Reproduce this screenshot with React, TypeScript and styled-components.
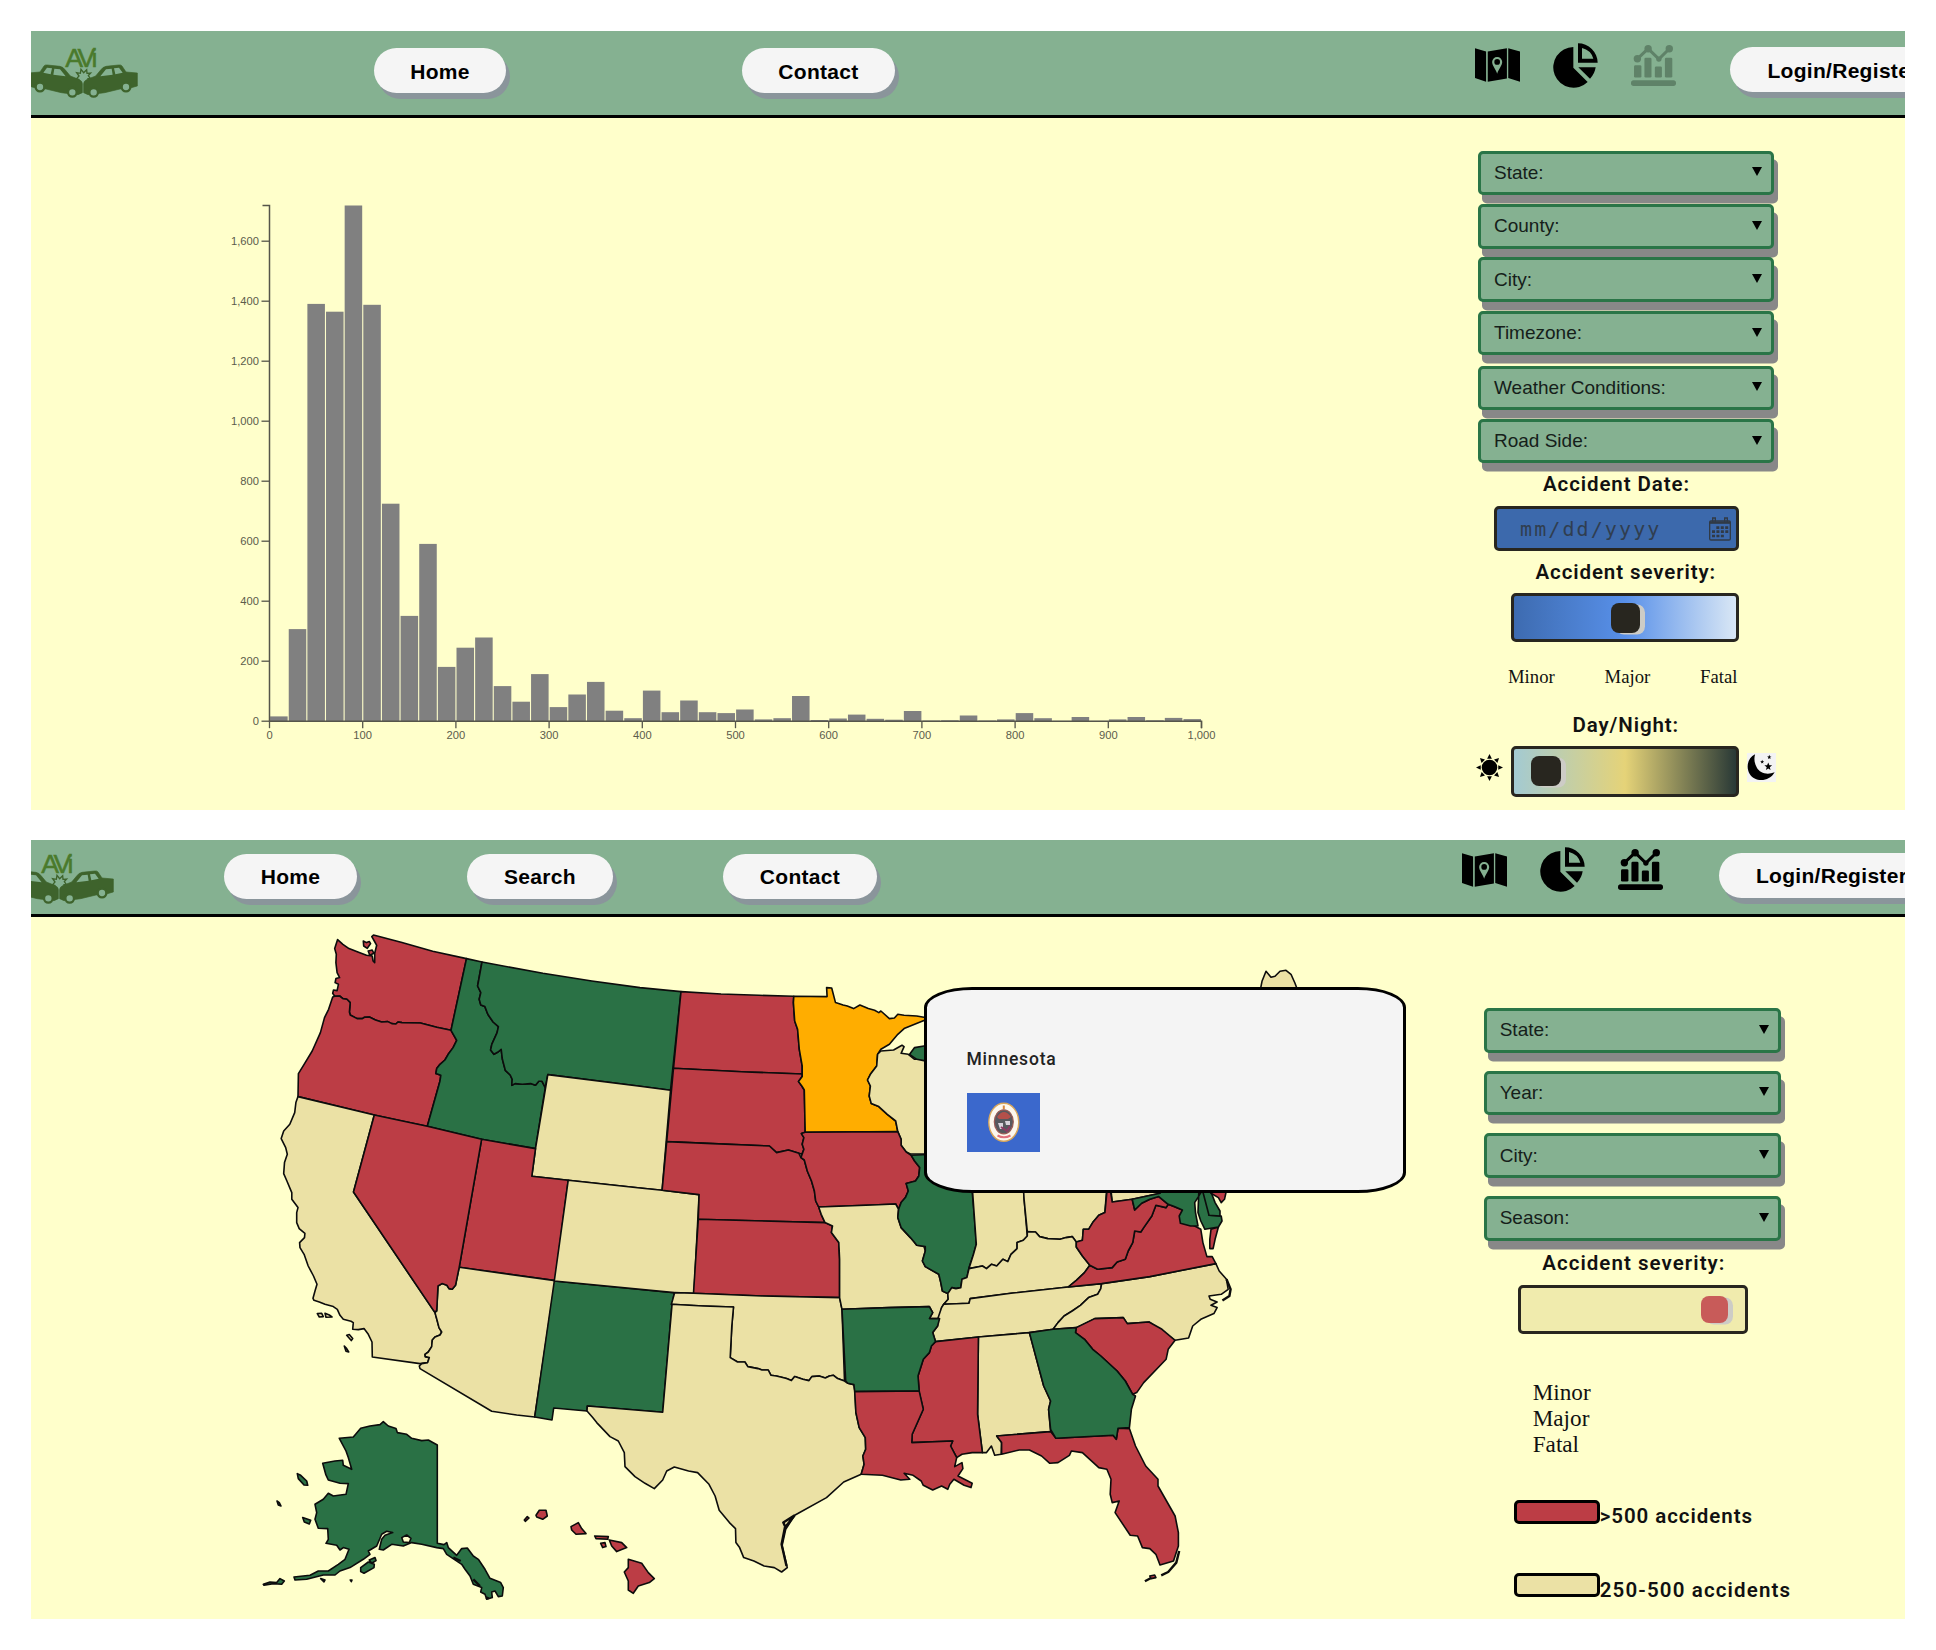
import React from "react";
import styled, { createGlobalStyle } from "styled-components";

const GlobalStyle = createGlobalStyle`
  * { box-sizing: border-box; }
  body { margin: 0; background: #ffffff; }
`;

const GREEN = "#85b191";
const RED = "#bc3d45";
const DARK = "#2a7145";
const SAND = "#ebe1a5";

const Page = styled.main`
  display: flex;
  flex-direction: column;
  gap: 30px;
  width: 1936px;
  height: 1650px;
  padding: 31px 31px 0;
  overflow: hidden;
`;

const Panel = styled.section`
  width: 1874px;
  height: 779px;
  background: #ffffcb;
  overflow: hidden;
`;

const Header = styled.header<{ $height: number }>`
  display: flex;
  align-items: flex-start;
  height: ${(p) => p.$height}px;
  background: ${GREEN};
  border-bottom: 3px solid #000;
  overflow: hidden;
`;

const LogoBox = styled.div<{ $left: number; $top: number }>`
  flex: none;
  width: 120px;
  height: 70px;
  margin: ${(p) => p.$top}px 0 0 ${(p) => p.$left}px;
`;

const NavButton = styled.button<{ $width: number; $left: number; $top: number }>`
  flex: none;
  width: ${(p) => p.$width}px;
  height: 45px;
  margin: ${(p) => p.$top}px 0 0 ${(p) => p.$left}px;
  padding: 2px 0 0;
  border: 0;
  border-radius: 23px;
  background: #f5f5f5;
  box-shadow: 4px 6px 0 #8a959b;
  color: #000;
  font: bold 21px "Liberation Sans", Arial, sans-serif;
  letter-spacing: 0.3px;
  white-space: nowrap;
`;

const IconBar = styled.div<{ $left: number; $top: number }>`
  display: flex;
  flex: none;
  align-items: center;
  gap: 33px;
  height: 46px;
  margin: ${(p) => p.$top}px 0 0 ${(p) => p.$left}px;
`;

const Body = styled.div`
  display: flex;
  position: relative;
`;

const Canvas = styled.div`
  flex: none;
  svg { display: block; }
`;

const Sidebar = styled.aside<{ $top: number; $left: number; $width: number }>`
  flex: none;
  display: flex;
  flex-direction: column;
  width: ${(p) => p.$width}px;
  margin-left: ${(p) => p.$left}px;
  padding-top: ${(p) => p.$top}px;
`;

const Fields = styled.div<{ $gap: number; $top?: number }>`
  display: flex;
  flex-direction: column;
  gap: ${(p) => p.$gap}px;
  margin-top: ${(p) => p.$top ?? 0}px;
`;

const Field = styled.div`
  display: flex;
  align-items: center;
  justify-content: space-between;
  height: 44.5px;
  padding: 0 9px 0 13px;
  border: 3px solid #2a7547;
  border-radius: 5px;
  background: ${GREEN};
  box-shadow: 4px 8.5px 0 #888;
  color: #15201a;
  font: 19px "Liberation Sans", Arial, sans-serif;
`;

const Arrow = styled.span`
  width: 0;
  height: 0;
  margin-top: -2px;
  border: solid transparent;
  border-width: 9px 5px 0;
  border-top-color: #000;
`;

const Caption = styled.div<{ $left: number; $top: number; $spacing?: number }>`
  height: 24px;
  margin: ${(p) => p.$top}px 0 0 ${(p) => p.$left}px;
  color: #111;
  font: 600 20.5px/24px Roboto, sans-serif;
  letter-spacing: ${(p) => p.$spacing ?? 0.9}px;
  white-space: nowrap;
`;

const DateInput = styled.div`
  display: flex;
  align-items: center;
  justify-content: space-between;
  width: 245px;
  height: 45.5px;
  margin: 9.5px 0 0 16px;
  padding: 2px 5px 0 23px;
  border: 3px solid #28261f;
  border-radius: 5px;
  background: #3c69ac;
  color: #303e50;
  font: 20px "DejaVu Sans Mono", monospace;
  letter-spacing: 2.1px;
`;

const Track = styled.div<{ $bg: string; $width: number; $height: number; $left: number; $top: number }>`
  flex: none;
  display: flex;
  align-items: flex-start;
  width: ${(p) => p.$width}px;
  height: ${(p) => p.$height}px;
  margin: ${(p) => p.$top}px 0 0 ${(p) => p.$left}px;
  border: 3px solid #28261f;
  border-radius: 5px;
  background: ${(p) => p.$bg};
`;

const Thumb = styled.div<{ $color: string; $size: number; $left: number; $top: number }>`
  width: ${(p) => p.$size}px;
  height: ${(p) => p.$size}px;
  margin: ${(p) => p.$top}px 0 0 ${(p) => p.$left}px;
  border-radius: 8px;
  background: ${(p) => p.$color};
  box-shadow: 5px 1.5px 0 #cdccc6;
`;

const Scale = styled.div`
  display: flex;
  justify-content: space-between;
  width: 229.5px;
  height: 22px;
  margin: 23.5px 0 0 30px;
  color: #111;
  font: 18.7px/22px "Liberation Serif", "Times New Roman", serif;
`;

const SkyRow = styled.div`
  display: flex;
  align-items: flex-start;
  width: 300px;
  margin: 9.3px 0 0 -2px;
`;

const SkyIcon = styled.svg<{ $left?: number; $top: number }>`
  flex: none;
  margin: ${(p) => p.$top}px 0 0 ${(p) => p.$left ?? 0}px;
`;

const SeverityList = styled.div`
  margin: 44.5px 0 43px 49px;
  color: #111;
  font: 23.2px/26px "Liberation Serif", "Times New Roman", serif;
`;

const LegendRow = styled.div`
  display: flex;
  height: 73.6px;
  margin-left: 30.3px;
`;

const Swatch = styled.span<{ $color: string }>`
  flex: none;
  width: 85.7px;
  height: 24px;
  border: 3px solid #000;
  border-radius: 5px;
  background: ${(p) => p.$color};
`;

const Tooltip = styled.div`
  position: absolute;
  left: 893px;
  top: 70px;
  width: 482px;
  height: 206px;
  padding: 58px 0 0 39.500px;
  border: 3px solid #000;
  border-radius: 10%;
  background: #f4f4f4;
  color: #222;
  font: 500 17.5px/22px Roboto, sans-serif;
  letter-spacing: 0.8px;
  svg { display: block; margin-top: 22.5px; }
`;

function Logo({ left, top }: { left: number; top: number }) {
  const car = (
    <>
      <path
        d="M2 99 L36 96 L48 78 Q51 74 58 75 L96 79 Q106 81 112 90 L127 108 L152 118 Q163 123 163 131 L163 158 L150 164 L114 160 L100 158 L54 147 L20 143 L2 138Z"
        fill="#3e632c"
        stroke="#3e632c"
        strokeWidth="2"
        strokeLinejoin="round"
      />
      <path d="M46 98 L57 83 L72 85 L68 103Z M79 86 L96 88 L113 109 L76 104Z" fill={GREEN} />
      <g fill={GREEN} stroke="#3e632c" strokeWidth="7">
        <circle cx="36" cy="141" r="13" />
        <circle cx="133" cy="157" r="13" />
      </g>
    </>
  );
  return (
    <LogoBox $left={left} $top={top}>
      <svg width="120" height="80" viewBox="0 0 360 240">
        {car}
        <g transform="translate(330 0) scale(-1 1)">{car}</g>
        <path
          d="M154 119 L145 117 L153 108 L146 98 L157 100 L159 88 L167 98 L176 89 L177 100 L188 99 L181 107 L187 116 L178 116"
          fill="none"
          stroke="#3e632c"
          strokeWidth="4"
        />
        <text
          x="112"
          y="80"
          fontFamily="Liberation Sans, Arial, sans-serif"
          fontSize="80"
          fill="#4a7a2c"
          stroke="#4a7a2c"
          strokeWidth="1.5"
          textLength="96"
          lengthAdjust="spacing"
        >
          AVi
        </text>
      </svg>
    </LogoBox>
  );
}

const MapIcon = () => (
  <svg width="45" height="34" viewBox="0 0 134 100">
    <path d="M0 0 L33 10 V100 L0 89Z M38 10 L95 0 V90 L38 100Z M99 0 L134 10 V100 L99 89Z" />
    <path d="M66 76 C62 62 51 52 51 41 A15 15 0 0 1 81 41 C81 52 70 62 66 76Z" fill={GREEN} />
    <circle cx="66" cy="41" r="8.5" />
  </svg>
);

const PieIcon = () => (
  <svg width="45" height="45" viewBox="0 0 135 135">
    <path d="M61 12 A61 61 0 1 0 104 117 L61 74Z" />
    <path d="M75 1 A59 59 0 0 1 134 59 H75Z M87 15 V47 H121 A46 46 0 0 0 87 15Z" fillRule="evenodd" />
    <path d="M76 73 H128 A60 60 0 0 1 111 107Z" />
  </svg>
);

const TrendIcon = ({ color = "#000" }: { color?: string }) => (
  <svg width="45" height="41" viewBox="0 0 134 122" fill={color}>
    <rect x="0" y="105" width="134" height="17" rx="8" />
    <rect x="9" y="60" width="22" height="37" rx="4" />
    <rect x="40" y="38" width="21" height="59" rx="4" />
    <rect x="71" y="64" width="21" height="33" rx="4" />
    <rect x="101" y="38" width="22" height="59" rx="4" />
    <path d="M19 41 L51 11 L83 42 L114 11" fill="none" stroke={color} strokeWidth="9" />
    <circle cx="19" cy="41" r="11" />
    <circle cx="51" cy="11" r="11" />
    <circle cx="83" cy="42" r="8" />
    <circle cx="114" cy="11" r="11" />
  </svg>
);

const CalendarIcon = () => (
  <svg width="22" height="24" viewBox="0 0 66 72" fill="none" stroke="#303a46" strokeWidth="4">
    <rect x="2" y="12" width="62" height="57" rx="4" />
    <path d="M2 17 H64" strokeWidth="7" />
    <path d="M11 15 V3 H19 V15 M47 15 V3 H55 V15" />
    <path d="M22 32 H58 M9 44 H58 M9 57 H46" strokeWidth="8" strokeDasharray="9 4.300" />
  </svg>
);

const BINS = [
  16, 307, 1391, 1365, 1719, 1388, 725, 351, 591, 181, 245, 279, 117, 65, 157, 47, 89, 131, 35, 10, 102, 30, 69, 30,
  27, 39, 6, 10, 84, 4, 9, 22, 8, 5, 34, 2, 3, 19, 2, 6, 27, 10, 1, 14, 1, 6, 14, 3, 11, 7,
];

const AXIS = { x: 238.5, y: 603.2, step: 18.64, unit: 0.3 };

function Histogram() {
  const top = AXIS.y - 1719 * AXIS.unit;
  const right = AXIS.x + AXIS.step * 50;
  const ticks = (n: number, by: number) => Array.from({ length: n }, (_, i) => i * by);
  return (
    <svg width="1400" height="690" fontFamily="Liberation Sans, Arial, sans-serif" fontSize="11.2" fill="#5c5c4c">
      <g fill="#808080">
        {BINS.map((v, i) => (
          <rect
            key={i}
            x={AXIS.x + i * AXIS.step + 0.6}
            y={AXIS.y - v * AXIS.unit}
            width={AXIS.step - 1.1}
            height={v * AXIS.unit}
          />
        ))}
      </g>
      <path
        d={`M${AXIS.x - 7} ${top} H${AXIS.x} V${AXIS.y} H${right} V${AXIS.y + 7}`}
        fill="none"
        stroke="#55554a"
        strokeWidth="1.5"
      />
      {ticks(9, 200).map((v) => {
        const y = AXIS.y - v * AXIS.unit;
        return (
          <g key={v}>
            <path d={`M${AXIS.x - 8} ${y} H${AXIS.x}`} stroke="#55554a" strokeWidth="1.3" />
            <text x={AXIS.x - 10.5} y={y + 3.8} textAnchor="end">
              {v.toLocaleString("en-US")}
            </text>
          </g>
        );
      })}
      {ticks(11, 100).map((v) => {
        const x = AXIS.x + (v / 20) * AXIS.step;
        return (
          <g key={v}>
            <path d={`M${x} ${AXIS.y} V${AXIS.y + 7}`} stroke="#55554a" strokeWidth="1.3" />
            <text x={x} y={AXIS.y + 18} textAnchor="middle">
              {v.toLocaleString("en-US")}
            </text>
          </g>
        );
      })}
    </svg>
  );
}

// Outlines are kept on five survey sheets; a letter switches the sheet that
// the following points belong to, and "/" starts a new island.
const SHEETS: Record<string, [number, number, number, number]> = {
  A: [0, 830, 2.45, 3],
  B: [620, 830, 2.376, 3],
  C: [240, 1240, 3, 3],
  D: [660, 1180, 2.45, 3],
  P: [0, 0, 1, 1],
};

function toPath(outline: string, closed = true) {
  let sheet = SHEETS.P;
  return outline
    .split("/")
    .map((part) => {
      const pts: string[] = [];
      part
        .trim()
        .split(/\s+/)
        .forEach((token) => {
          if (SHEETS[token]) {
            sheet = SHEETS[token];
            return;
          }
          const [x, y] = token.split(",").map(Number);
          pts.push(`${(sheet[0] + x / sheet[2]).toFixed(1)} ${(sheet[1] + y / sheet[3]).toFixed(1)}`);
        });
      return `M${pts.join("L")}${closed ? "Z" : ""}`;
    })
    .join("");
}

const STATES: [string, string][] = [
  [RED, "A 915,317 985,340 1060,366 1143,388 1105,603 1070,594 1030,581 985,580 975,578 970,584 960,583 950,577 935,578 920,572 905,563 893,564 888,568 875,568 858,557 856,548 858,520 850,510 840,508 832,500 820,501 815,492 817,482 826,484 829,465 821,460 823,448 832,445 826,430 823,400 824,375 820,358 827,331 840,345 855,358 880,370 898,378 912,380 914,395 918,400 918,372 923,348 917,335 911,322 / 890,335 898,340 905,337 908,343 900,357 891,350 / 902,365 912,362 916,372 906,378"],
  [RED, "A 815,503 820,501 832,500 840,508 850,510 858,520 856,548 858,557 875,568 888,568 893,564 905,563 920,572 935,578 950,577 960,583 970,584 975,578 985,580 1030,581 1070,594 1105,603 1119,633 1110,655 1098,675 1090,692 1078,705 1070,718 1068,733 1080,738 1078,755 1047,891 985,875 917,857 730,802 731,733 745,705 765,665 785,610 795,565 805,540"],
  [DARK, "A 1143,388 1181,398 1170,470 1178,490 1174,510 1178,527 1188,532 1195,555 1208,578 1221,592 1218,610 1205,645 1202,662 1210,675 1220,668 1228,660 1231,690 1238,723 1250,737 1255,750 1254,768 1262,763 1280,765 1300,763 1312,768 1320,756 1328,756 1336,775 1312,958 1180,930 1047,891 1078,755 1080,738 1068,733 1070,718 1078,705 1090,692 1098,675 1110,655 1119,633 1105,603"],
  [DARK, "A 1181,398 1330,432 1450,455 1568,475 B 145,487 120,783 A 1568,771 1342,736 1336,775 1328,756 1320,756 1312,768 1300,763 1280,765 1262,763 1254,768 1255,750 1250,737 1238,723 1231,690 1228,660 1220,668 1210,675 1202,662 1205,645 1218,610 1221,592 1208,578 1195,555 1188,532 1178,527 1174,510 1178,490 1170,470"],
  [SAND, "A 1342,736 1568,771 B 120,783 100,1083 A 1568,1076 1392,1053 1303,1041 1312,958"],
  [RED, "A 1180,930 1312,958 1303,1041 1392,1053 1360,1354 1125,1314"],
  [SAND, "A 730,802 917,857 866,1088 1064,1447 C 585,220 592,245 597,265 605,278 600,287 585,293 577,302 575,322 565,338 555,345 556,352 568,355 563,370 540,373 397,353 396,308 385,285 372,268 355,271 338,270 340,250 333,246 310,240 300,228 292,210 280,202 255,195 238,188 222,183 219,177 225,155 231,135 A 768,1340 755,1310 745,1275 735,1255 734,1240 746,1225 747,1212 733,1198 727,1180 727,1150 730,1135 715,1110 715,1090 703,1055 695,1033 697,1000 704,975 700,955 689,928 695,905 710,885 722,850 725,820 / C 232,223 245,222 250,232 238,233 / 255,222 268,227 276,233 258,234 / 320,288 328,286 338,298 334,304 / 313,320 320,328 326,338 318,336"],
  [SAND, "A 1125,1314 1360,1354 C 884,533 830,527 755,516 540,388 538,380 545,373 563,370 568,355 556,352 555,345 565,338 575,322 577,302 585,293 600,287 605,278 597,265 592,245 585,220 A 1070,1445 1073,1370 1083,1363 1095,1368 1100,1378 1108,1380 1116,1368"],
  [RED, "A 917,857 1047,891 1180,930 1125,1314 1116,1368 1108,1380 1100,1378 1095,1368 1083,1363 1073,1370 1070,1445 1064,1447 866,1088"],
  [DARK, "C 943,125 1303,160 1296,197 1268,519 1042,500 1041,515 941,506 936,542 884,533"],
  [SAND, "A 1392,1053 1568,1076 B 100,1083 188,1096 C 1362,162 1303,160 943,125"],
  [RED, "B 145,487 240,494 330,498 413,501 412,520 415,575 422,600 426,660 433,710 433,734 300,728 127,717"],
  [RED, "B 127,717 300,728 433,734 433,742 424,757 432,770 438,782 440,909 431,913 437,925 433,945 437,960 432,975 425,972 400,962 372,970 355,950 220,943 111,937"],
  [RED, "B 111,937 220,943 355,950 372,970 400,962 425,972 430,985 438,992 445,1025 455,1055 462,1085 465,1115 472,1133 478,1155 487,1180 186,1170 188,1096 100,1083"],
  [RED, "B 186,1170 487,1180 505,1190 D 422,145 420,160 438,190 440,240 440,355 250,350 82,342"],
  [SAND, "D 36,340 82,342 250,350 440,355 446,390 452,605 435,598 425,588 415,590 405,596 390,590 372,592 365,604 350,600 330,592 322,604 310,598 298,594 285,590 272,588 265,572 250,572 240,568 215,562 208,548 190,548 172,535 176,440 180,383 105,380 28,375"],
  [SAND, "D 28,375 105,380 180,383 176,440 172,535 190,548 208,548 215,562 240,568 250,572 265,572 272,588 285,590 298,594 310,598 322,604 330,592 350,600 365,604 372,592 390,590 405,596 415,590 425,588 435,598 452,605 460,612 475,616 478,640 480,700 488,745 503,775 504,810 497,830 500,855 493,885 450,908 408,955 330,1008 308,1050 299,1100 308,1145 312,1165 298,1178 280,1165 255,1160 230,1145 205,1135 195,1105 186,1090 185,1048 170,1030 145,993 135,950 120,915 92,880 70,875 35,863 C 1280,695 1268,722 1243,748 1215,732 1185,712 1155,682 1153,640 1135,605 1110,592 1070,550 1058,535 1041,515 1042,500 1268,519 1296,197"],
  ["#ffad00", "B 413,501 492,502 491,475 503,476 512,520 530,527 540,530 555,538 570,527 590,538 605,543 615,550 620,545 640,568 652,566 660,555 675,558 705,560 722,564 735,570 722,574 675,598 660,615 640,645 620,660 612,675 610,710 595,735 588,752 595,770 592,800 597,823 615,832 635,855 655,875 660,907 440,909 438,782 432,770 424,757 433,742 433,734 433,710 426,660 422,600 415,575 412,520"],
  [SAND, "B 612,675 620,665 650,662 670,648 675,652 668,672 685,675 700,690 760,690 760,974 690,974 680,968 668,948 668,930 660,907 655,875 635,855 615,832 597,823 592,800 595,770 588,752 595,735 610,710"],
  [DARK, "B 688,675 700,655 722,650 760,650 760,700 722,694 705,690"],
  [RED, "B 431,913 440,909 660,907 668,930 668,948 680,968 692,978 700,995 712,1015 710,1040 702,1055 680,1063 685,1085 678,1105 668,1120 662,1140 655,1124 600,1127 472,1133 465,1115 462,1085 455,1055 445,1025 438,992 430,985 437,960 433,945 437,925"],
  [SAND, "B 472,1133 600,1127 655,1124 662,1140 660,1165 668,1195 690,1225 700,1240 705,1248 722,1250 D 650,215 643,245 650,262 683,285 688,310 692,335 705,343 706,360 695,375 690,385 685,418 660,418 668,400 660,382 560,385 446,390 440,355 440,240 438,190 420,160 422,145 B 505,1190 487,1180 478,1155"],
  [DARK, "B 692,978 760,974 835,1040 D 765,38 770,110 775,195 768,225 757,265 752,295 740,300 737,325 725,328 715,325 705,343 692,335 688,310 683,285 650,262 643,245 650,215 650,202 B 705,1248 700,1240 690,1225 668,1195 660,1165 662,1140 668,1120 678,1105 685,1085 680,1063 702,1055 710,1040 712,1015 700,995"],
  [SAND, "D 765,20 890,20 892,60 900,170 890,183 875,190 875,208 860,225 852,247 840,240 825,260 812,255 800,268 790,260 757,268 768,225 775,195 770,110"],
  [SAND, "D 890,20 1095,20 1090,100 1075,108 1060,130 1050,150 1037,150 1035,183 1020,188 1010,172 995,175 980,180 950,178 930,172 920,158 900,157 892,60"],
  [SAND, "D 900,157 920,158 930,172 950,178 980,180 995,175 1010,172 1020,188 1020,203 1035,230 1053,258 1040,280 1020,303 1000,323 860,342 760,358 757,372 695,375 706,360 705,343 715,325 725,328 737,325 740,300 752,295 757,268 790,260 800,268 812,255 825,260 840,240 852,247 860,225 875,208 875,190 890,183 900,170"],
  [SAND, "D 695,375 757,372 760,358 860,342 1000,323 1082,313 1080,328 1072,345 1050,355 1030,378 1010,395 990,410 975,430 963,450 905,460 780,473 675,487 668,460 680,440 680,420 690,385"],
  [SAND, "D 1082,313 1200,292 1362,253 1370,275 1388,300 1392,330 1375,345 1345,350 1348,360 1365,368 1350,378 1365,385 1357,403 1325,420 1305,440 1295,476 1262,483 1198,428 1145,433 1135,415 1065,418 1020,445 963,450 975,430 990,410 1010,395 1030,378 1050,355 1072,345 1080,328"],
  [RED, "D 1065,418 1135,415 1145,433 1198,428 1230,450 1262,483 1245,510 1240,540 1185,610 1168,640 1158,645 1140,605 1120,575 1080,530 1060,510 1040,480 1018,460 1020,445"],
  [SAND, "D 780,473 905,460 940,620 957,665 952,690 957,757 825,770 837,790 836,825 820,828 812,800 800,820 790,820 778,705"],
  [RED, "D 675,487 780,473 778,705 790,820 765,820 740,825 727,835 712,800 717,785 617,790 618,765 645,690 635,640 632,590 645,540 660,520 665,500"],
  [DARK, "D 446,390 560,385 660,382 668,400 660,418 685,418 680,440 668,460 675,487 665,500 660,520 645,540 632,590 635,635 477,637 475,616 460,612 455,605"],
  [RED, "D 477,637 635,635 645,690 618,765 617,790 717,785 712,800 727,835 722,862 740,850 742,868 730,890 765,912 762,925 745,918 720,900 710,915 705,930 690,920 668,932 645,918 640,905 620,888 598,882 612,900 590,902 545,888 493,885 500,855 497,830 504,810 503,775 488,745 480,700"],
  [RED, "D 825,770 957,757 970,777 1110,768 1118,780 1122,747 1150,748 1165,800 1190,860 1220,900 1220,920 1262,1010 1270,1060 1270,1100 1258,1145 1225,1157 1215,1125 1200,1108 1182,1105 1170,1070 1152,1068 1115,1000 1125,965 1108,970 1103,945 1105,900 1095,870 1075,865 1035,820 1008,815 1003,828 975,850 955,852 935,830 905,812 880,812 837,825 837,790 / 1200,1190 1212,1187 1215,1195 1203,1198"],
  [DARK, "D 905,460 963,450 1020,445 1018,460 1040,480 1060,510 1080,530 1120,575 1140,605 1158,645 1165,650 1155,690 1150,745 1122,747 1118,780 1110,768 970,777 957,750 952,690 957,665 940,620"],
  [SAND, "D 1104,20 1230,20 1225,42 1157,60 1108,68"],
  [RED, "D 1000,323 1020,303 1040,280 1053,258 1072,270 1108,265 1120,248 1140,240 1147,215 1158,190 1163,155 1178,158 1185,145 1205,110 1215,78 1240,85 1245,75 1280,92 1275,120 1310,140 1325,150 1330,190 1340,232 1353,232 1362,253 1200,292 1082,313 / 1350,150 1368,143 1360,180 1355,208 1347,208 1347,180"],
  [RED, "D 1095,38 1104,38 1108,68 1157,60 1163,92 1180,72 1200,60 1213,55 1222,52 1245,75 1240,85 1215,78 1205,110 1185,145 1178,158 1163,155 1158,190 1147,215 1140,240 1120,248 1108,265 1072,270 1053,258 1035,230 1020,203 1020,188 1035,183 1037,150 1050,150 1060,130 1075,108 1090,100"],
  [DARK, "D 1157,60 1225,42 1230,30 1330,30 1310,70 1312,100 1318,140 1300,140 1275,132 1272,110 1280,92 1260,82 1245,75 1222,52 1200,60 1180,72 1163,92 / 1320,38 1345,38 1345,108 1375,110 1377,125 1368,143 1335,150 1325,125 1318,100"],
  [DARK, "D 1330,38 1350,38 1360,70 1372,95 1372,110 1345,108"],
  [RED, "D 1345,30 1387,38 1383,60 1375,70 1368,55 1350,42"],
  [SAND, "P 1260,992 1262,982 1266,972 1271,978 1275,977 1280,972 1286,971 1291,975 1295,984 1298,992"],
  [DARK, "C 430,547 445,560 468,568 472,580 500,585 515,597 545,604 565,602 592,617 592,912 612,916 620,910 625,925 650,948 665,928 682,926 700,950 715,960 735,990 750,1017 782,1030 790,1045 787,1070 775,1072 765,1055 755,1058 757,1075 740,1080 735,1065 722,1058 725,1045 700,1035 690,1010 675,990 665,975 620,945 610,928 590,925 545,915 515,910 490,920 455,915 430,932 418,930 425,900 435,888 458,880 440,876 425,885 410,920 385,935 390,945 370,960 330,985 300,995 285,1007 250,1007 200,1020 165,1022 162,1013 210,1008 235,995 265,995 295,975 315,960 327,930 310,925 300,932 290,918 258,912 265,900 263,868 235,867 225,840 230,820 225,795 250,780 265,762 280,770 318,765 325,733 300,732 265,722 257,705 248,672 285,665 308,663 310,678 335,690 325,655 318,635 298,597 340,593 362,567 390,560 420,556 / 172,703 182,708 200,725 203,738 192,737 175,718 / 111,785 118,790 123,800 115,797 / 188,835 212,843 208,854 193,848 / 362,985 385,968 403,975 402,985 372,1002 362,997 / 388,962 405,955 408,964 395,972 / 70,1035 90,1028 110,1030 120,1018 133,1025 125,1035 100,1033 72,1038 / 242,1018 255,1022 252,1028 / 331,1022 336,1022 334,1027"],
  ["#ffffcb", "C 485,895 500,887 513,897 508,910 490,908"],
  [RED, "C 888,828 898,813 918,813 922,830 908,840 890,833 / 853,842 862,832 867,836 856,846 / 993,862 1015,850 1025,868 1038,883 1008,885 995,872 / 1064,890 1105,892 1103,900 1068,898 / 1082,912 1095,910 1098,922 1088,925 / 1108,902 1145,910 1160,925 1130,937 1115,920 / 1165,960 1205,972 1225,1000 1243,1018 1228,1030 1195,1040 1180,1062 1165,1052 1165,1025 1153,998 1165,985"],
];

// Barrier islands and keys: open strokes drawn a little heavier.
const COAST =
  "D 330,1008 306,1045 298,1095 310,1160 / 330,1008 302,1030 306,1040 / 1388,300 1398,330 1395,350 1378,364 / 1272,1115 1265,1150 1245,1178 1228,1188 / 1188,1206 1203,1196 / C 640,955 662,965 / 700,1020 720,1040 / 738,1074 746,1078";

function StateMap() {
  return (
    <svg width="1389" height="702" viewBox="31 917.7 1389 702">
      <g stroke="#0c0c0c" strokeWidth="1.6" strokeLinejoin="round">
        {STATES.map(([fill, outline], i) => (
          <path key={i} d={toPath(outline)} fill={fill} />
        ))}
        <path d={toPath(COAST, false)} fill="none" strokeWidth="2.4" />
      </g>
    </svg>
  );
}

const Flag = () => (
  <svg width="73.5" height="59" viewBox="0 0 73.5 59">
    <rect width="73.5" height="59" fill="#3b68cc" />
    <ellipse cx="36.8" cy="29.3" rx="15" ry="19" fill="#fdf8ee" stroke="#d9a75b" strokeWidth="1.4" />
    <ellipse cx="36.8" cy="28.8" rx="9.5" ry="12" fill="#57595e" stroke="#9a5b55" strokeWidth="1.2" />
    <path d="M30 24 Q37 14 44 24 L41 26 H32Z" fill="#b4504a" />
    <path d="M31 30 H36 V36 H33Z M38 28 H43 V32 H39Z" fill="#d9d3dc" />
    <path d="M34 34 L40 38 L43 33" stroke="#8e3a63" strokeWidth="2" fill="none" />
    <path d="M30.5 42.5 Q37 46 43.5 42.5" stroke="#e0707c" strokeWidth="2" fill="none" />
    <path d="M36.8 12.5 V16" stroke="#d9863b" strokeWidth="2" />
  </svg>
);

const Sun = () => (
  <SkyIcon $top={8} width="27" height="27" viewBox="-40 -40 80 80">
    <circle r="23" />
    {Array.from({ length: 8 }, (_, i) => (
      <path key={i} d="M-7 -26 L0 -40 L7 -26Z" transform={`rotate(${i * 45})`} />
    ))}
  </SkyIcon>
);

const star = "M0 -10 L3 -3 L10 -3 L4 2 L6 9 L0 5 L-6 9 L-4 2 L-10 -3 L-3 -3Z";

const Moon = () => (
  <SkyIcon $top={7} $left={7.5} width="29" height="29" viewBox="0 0 86 86">
    <rect width="86" height="86" fill="#f3f3f3" />
    <path d="M24 4 C2 14 -4 42 8 62 C24 88 66 86 82 57 C60 66 38 60 29 43 C22 30 20 18 24 4Z" />
    <path d={star} transform="translate(63 40) scale(1.15)" />
    <path d={star} transform="translate(45 26) scale(.6)" />
    <path d={star} transform="translate(66 12) scale(.65)" />
  </SkyIcon>
);

const Dropdown = ({ label }: { label: string }) => (
  <Field>
    {label}
    <Arrow />
  </Field>
);

function ChartPanel() {
  return (
    <Panel>
      <Header $height={87}>
        <Logo left={-3} top={9} />
        <NavButton $width={132} $left={226} $top={17}>Home</NavButton>
        <NavButton $width={153} $left={236} $top={17}>Contact</NavButton>
        <IconBar $left={580} $top={11}>
          <MapIcon />
          <PieIcon />
          <TrendIcon color="#5f8268" />
        </IconBar>
        <NavButton $width={226} $left={54} $top={16}>Login/Register</NavButton>
      </Header>
      <Body>
        <Canvas>
          <Histogram />
        </Canvas>
        <Sidebar $top={32.7} $left={47} $width={295.5}>
          <Fields $gap={8.9}>
            {["State:", "County:", "City:", "Timezone:"].map((l) => <Dropdown key={l} label={l} />)}
          </Fields>
          <Fields $gap={8.9} $top={10.2}>
            {["Weather Conditions:", "Road Side:"].map((l) => <Dropdown key={l} label={l} />)}
          </Fields>
          <Caption $left={65} $top={8.7}>Accident Date:</Caption>
          <DateInput>
            mm/dd/yyyy
            <CalendarIcon />
          </DateInput>
          <Caption $left={57.5} $top={8.5}>Accident severity:</Caption>
          <Track
            $bg="linear-gradient(90deg, #3d6bb0, #5890e9 50%, #d9e7f5)"
            $width={228}
            $height={49}
            $left={33.3}
            $top={9.7}
          >
            <Thumb $color="#28261f" $size={29.3} $left={96.5} $top={7} />
          </Track>
          <Scale>
            <span>Minor</span>
            <span>Major</span>
            <span>Fatal</span>
          </Scale>
          <Caption $left={94.5} $top={25}>Day/Night:</Caption>
          <SkyRow>
            <Sun />
            <Track
              $bg="linear-gradient(90deg, #a3cad2, #e5d378 50%, #293936)"
              $width={228}
              $height={50.5}
              $left={8.3}
              $top={0}
            >
              <Thumb $color="#28261f" $size={29.3} $left={17} $top={7.3} />
            </Track>
            <Moon />
          </SkyRow>
        </Sidebar>
      </Body>
    </Panel>
  );
}

function MapPanel() {
  return (
    <Panel>
      <Header $height={77}>
        <Logo left={-27} top={6} />
        <NavButton $width={133} $left={100} $top={13.5}>Home</NavButton>
        <NavButton $width={146} $left={110} $top={13.5}>Search</NavButton>
        <NavButton $width={154} $left={110} $top={13.5}>Contact</NavButton>
        <IconBar $left={584.5} $top={6.5}>
          <MapIcon />
          <PieIcon />
          <TrendIcon />
        </IconBar>
        <NavButton $width={226} $left={56} $top={12.5}>Login/Register</NavButton>
      </Header>
      <Body>
        <Canvas>
          <StateMap />
        </Canvas>
        <Sidebar $top={91} $left={63.7} $width={297.6}>
          <Fields $gap={18.2}>
            {["State:", "Year:", "City:", "Season:"].map((l) => <Dropdown key={l} label={l} />)}
          </Fields>
          <Caption $left={58.5} $top={10.8} $spacing={1.05}>Accident severity:</Caption>
          <Track $bg="#f0ebad" $width={229.5} $height={49.5} $left={34.6} $top={9.5}>
            <Thumb $color="#c85b59" $size={26.7} $left={179.7} $top={8.6} />
          </Track>
          <SeverityList>
            <div>Minor</div>
            <div>Major</div>
            <div>Fatal</div>
          </SeverityList>
          <LegendRow>
            <Swatch $color={RED} />
            <Caption $left={0} $top={4.5} $spacing={0.95}>&gt;500 accidents</Caption>
          </LegendRow>
          <LegendRow>
            <Swatch $color={SAND} />
            <Caption $left={0} $top={4.5} $spacing={1.15}>250-500 accidents</Caption>
          </LegendRow>
        </Sidebar>
        <Tooltip>
          Minnesota
          <Flag />
        </Tooltip>
      </Body>
    </Panel>
  );
}

export default function App() {
  return (
    <Page>
      <GlobalStyle />
      <ChartPanel />
      <MapPanel />
    </Page>
  );
}
